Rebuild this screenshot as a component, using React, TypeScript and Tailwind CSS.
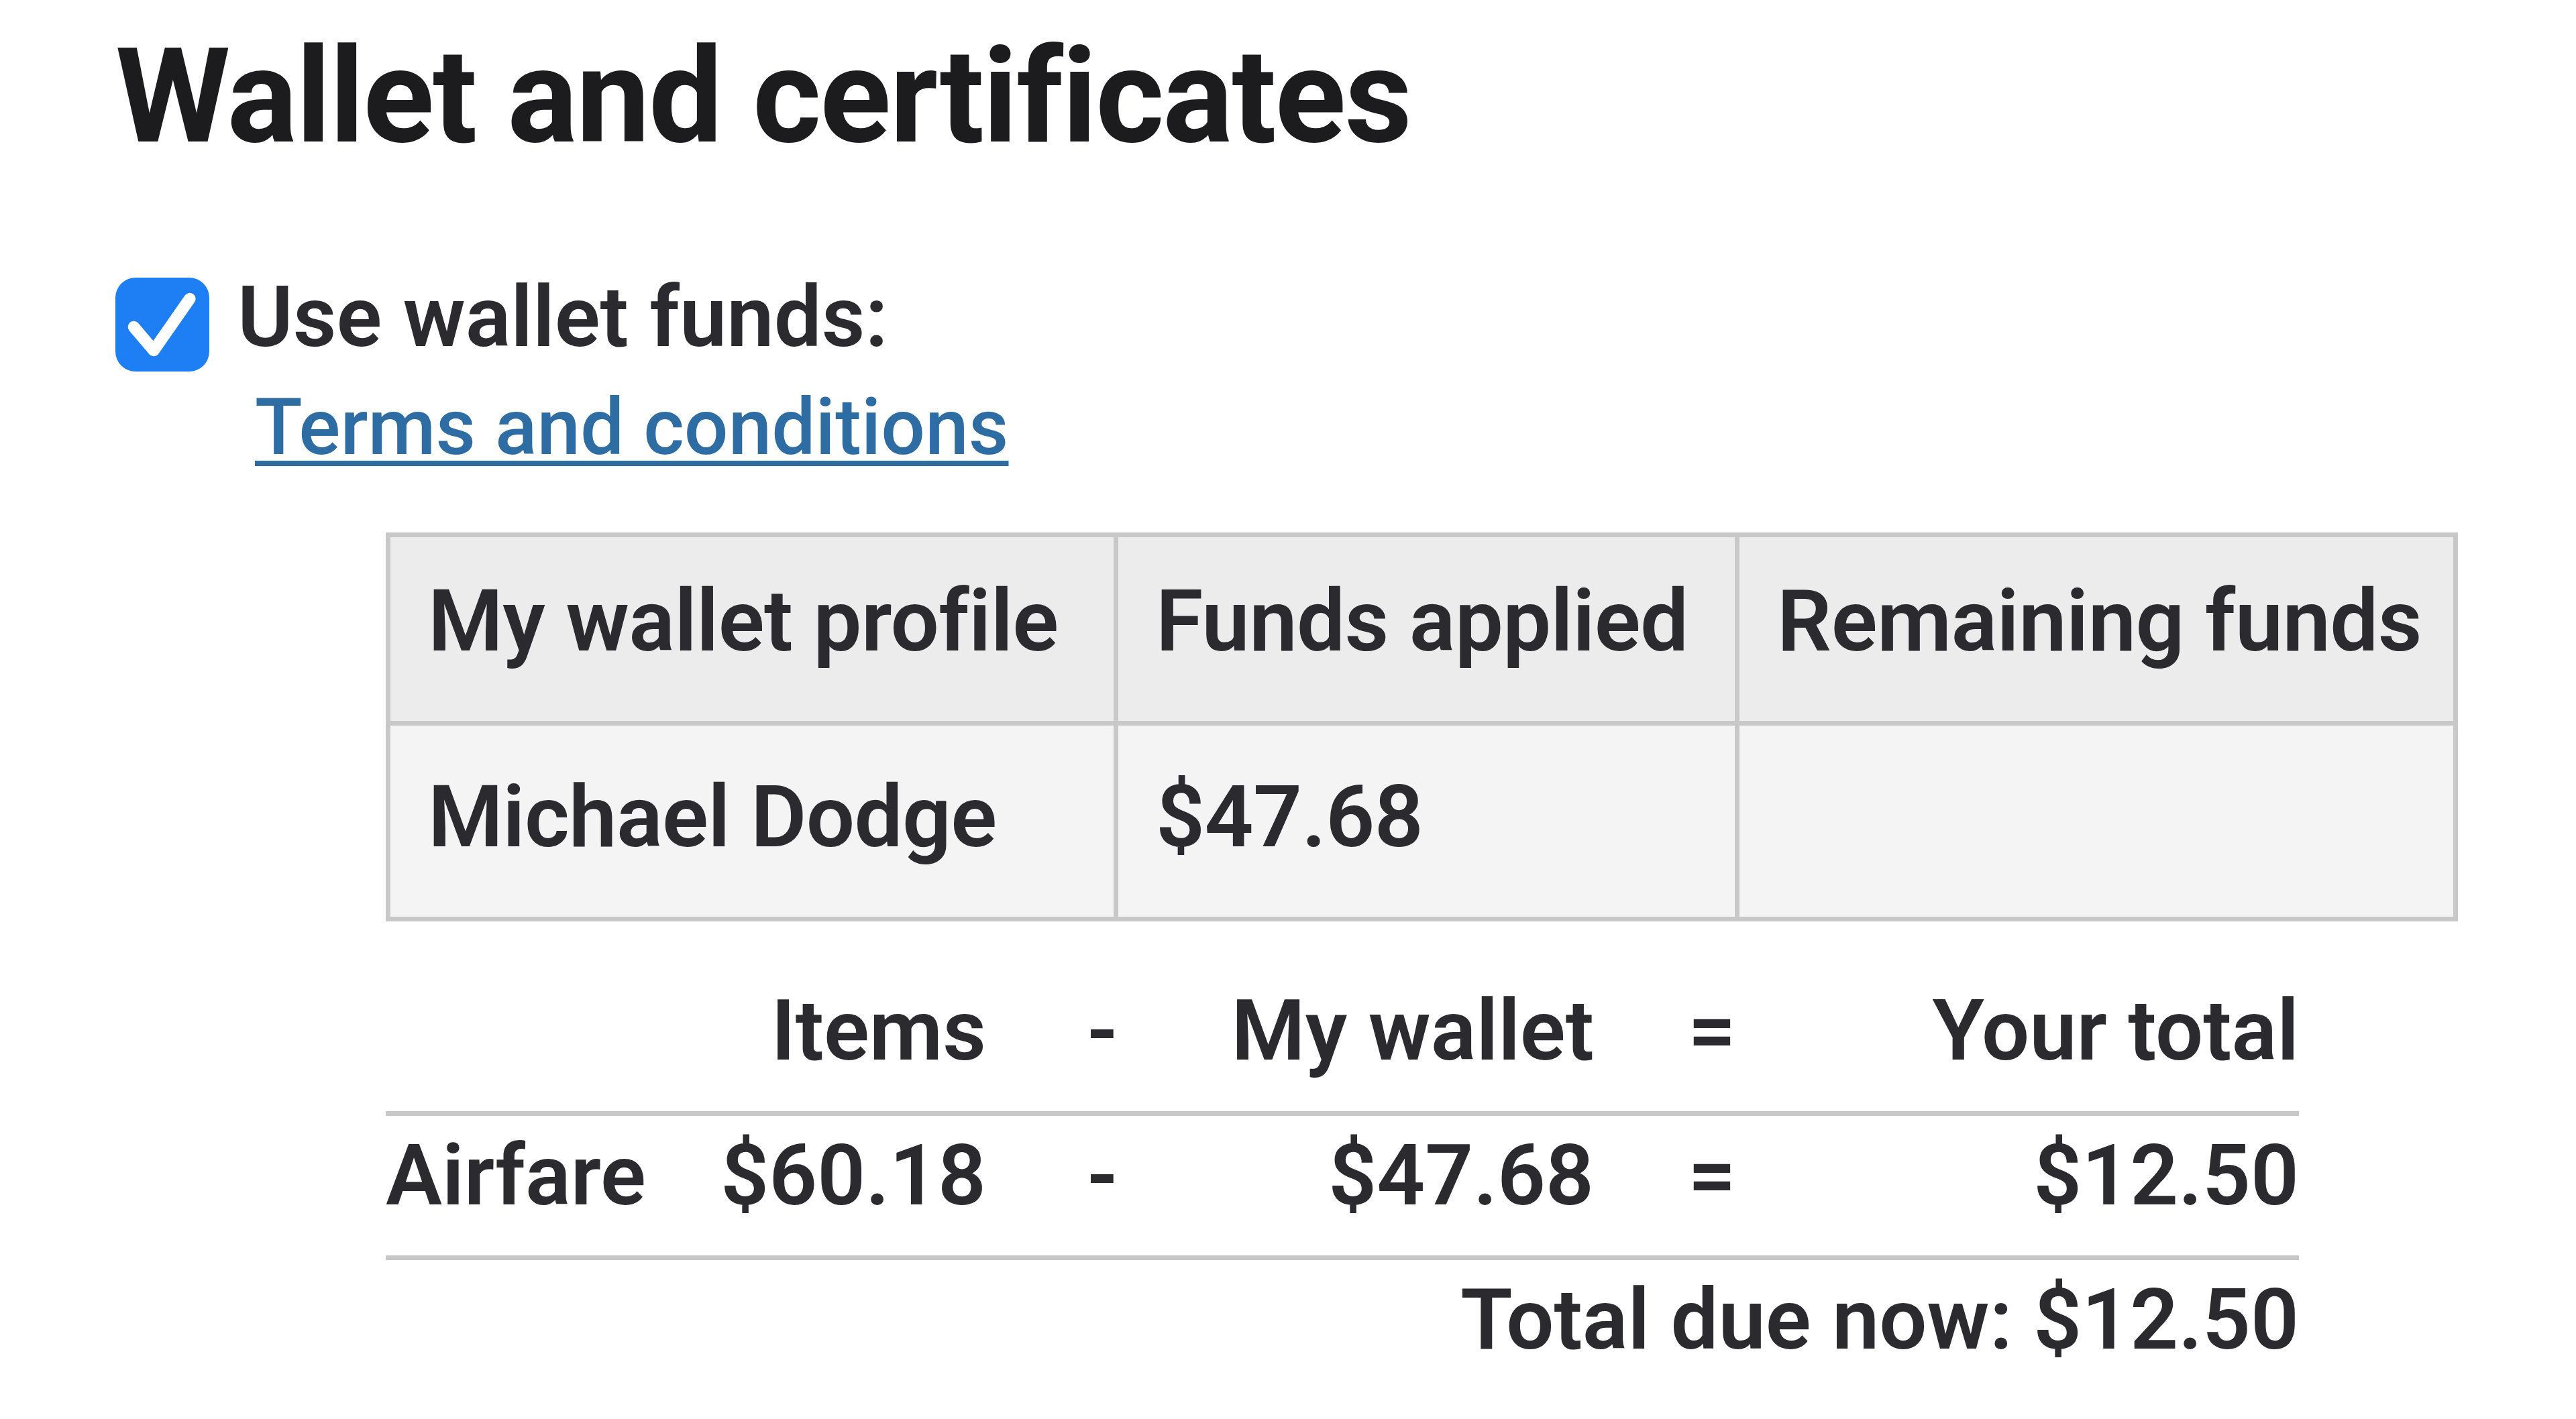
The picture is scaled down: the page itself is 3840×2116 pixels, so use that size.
import React from 'react'

function CheckBox() {
  return (
    <div className="mt-[4px] flex h-[140px] w-[140px] shrink-0 items-center justify-center rounded-[30px] bg-[#1e7ff5]">
      <svg viewBox="0 0 24 24" className="h-[140px] w-[140px]" fill="none">
        <path d="M4.7 12.6 L9.8 18.6 L19 5.4" stroke="#fff" strokeWidth="3" strokeLinecap="round" strokeLinejoin="round" />
      </svg>
    </div>
  )
}

function Cell({ children, head }: { children?: React.ReactNode; head?: boolean }) {
  return (
    <div className={head ? 'bg-[#ececed] pl-[56px] pt-[61px]' : 'bg-[#f4f4f5] pl-[56px] pt-[72px]'}>
      {children}
    </div>
  )
}

const cols = 'grid grid-cols-[425px_470px_346px_560px_352px_699px] items-start'

export default function App() {
  return (
    <div className="h-[2116px] w-[3840px] overflow-hidden bg-white font-[Roboto,sans-serif] text-[#2b2b2f]">
      <div className="pl-[172px] pt-[46px]">
        <h1 className="text-[196px] font-bold leading-none tracking-[-0.01em] text-[#1c1c1e]">Wallet and certificates</h1>

        <div className="mt-[168px] flex items-start gap-[42px]">
          <CheckBox />
          <div className="flex flex-col">
            <span className="text-[126px] font-semibold leading-none">Use wallet funds:</span>
            <a href="#" className="ml-[26px] mt-[43px] text-[116px] font-medium leading-none text-[#2e6da4] underline decoration-[8px] underline-offset-[10px]">
              Terms and conditions
            </a>
          </div>
        </div>
      </div>

      {/* wallet table */}
      <div className="ml-[575px] mt-[99px] grid w-[3089px] grid-cols-[1078px_919px_1064px] grid-rows-[274px_285px] gap-[7px] bg-[#c8c8c8] p-[7px] text-[128px] font-semibold leading-none tracking-[-0.005em]">
        <Cell head>My wallet profile</Cell>
        <Cell head>Funds applied</Cell>
        <Cell head>Remaining funds</Cell>
        <Cell>Michael Dodge</Cell>
        <Cell>$47.68</Cell>
        <Cell />
      </div>

      {/* items summary */}
      <div className="ml-[575px] mt-[100px] w-[2852px] text-[126px] font-semibold leading-none">
        <div className={`${cols} border-b-[7px] border-[#c8c8c8] pb-[57px]`}>
          <span />
          <span className="text-right">Items</span>
          <span className="text-center">-</span>
          <span className="text-right">My wallet</span>
          <span className="text-center">=</span>
          <span className="text-right">Your total</span>
        </div>
        <div className={`${cols} border-b-[7px] border-[#c8c8c8] pb-[56px] pt-[26px]`}>
          <span>Airfare</span>
          <span className="text-right">$60.18</span>
          <span className="text-center">-</span>
          <span className="text-right">$47.68</span>
          <span className="text-center">=</span>
          <span className="text-right">$12.50</span>
        </div>
        <div className="pt-[26px] text-right">Total due now: $12.50</div>
      </div>
    </div>
  )
}
